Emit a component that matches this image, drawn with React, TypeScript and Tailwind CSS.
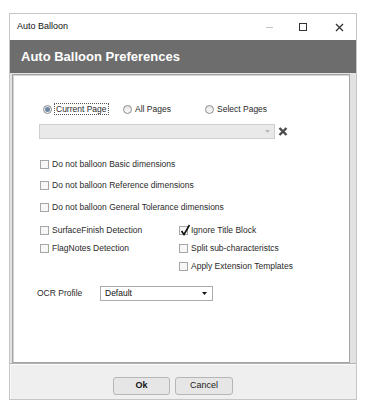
import type { ReactNode } from 'react';

const font = { fontFamily: '"Liberation Sans", Arial, sans-serif' };

function Radio({ checked, children }: { checked?: boolean; children: ReactNode }) {
  return (
    <div className="flex items-center">
      <span className="flex h-[9px] w-[9px] items-center justify-center rounded-full border border-[#8c8c8c] bg-gradient-to-b from-[#e6e6e6] to-[#fafafa]">
        {checked && <span className="h-[5px] w-[5px] rounded-full bg-[#6f86a3]" />}
      </span>
      {children}
    </div>
  );
}

function Check({ checked, label }: { checked?: boolean; label: string }) {
  return (
    <div className="flex h-[11px] items-center">
      <span className="relative h-[9px] w-[9px] border border-[#a6a6a6] bg-[#f7f7f7]">
        {checked && (
          <svg
            className="absolute left-[0px] top-[-3px]"
            width="11"
            height="12"
            viewBox="0 0 11 12"
          >
            <path d="M1.5 7 L4 10.5 L9.5 1" fill="none" stroke="#111" strokeWidth="1.6" />
          </svg>
        )}
      </span>
      <span className="ml-[3px] text-[8.5px] leading-none text-[#2a2a2a]">{label}</span>
    </div>
  );
}

export default function App() {
  return (
    <div className="h-[413px] w-[372px] bg-white pl-[9px] pt-[13px]" style={font}>
      <div className="flex h-[387px] w-[348px] flex-col border border-[#c6c6c6]">
        {/* title bar */}
        <div className="flex h-[26px] items-center bg-white pl-[7px]">
          <span className="flex-1 text-[9px] text-[#111]">Auto Balloon</span>
          <span className="mr-[26px] h-px w-[7px] bg-[#c4c4c4]" />
          <span className="mr-[28px] h-[8px] w-[8px] border-[1.5px] border-[#333]" />
          <svg className="mr-[12px]" width="9" height="9" viewBox="0 0 9 9">
            <path d="M1 1 L8 8 M8 1 L1 8" stroke="#333" strokeWidth="1.3" />
          </svg>
        </div>

        {/* header */}
        <div className="flex h-[33px] items-center bg-[#6d6d6d] pl-[11px]">
          <span className="text-[13px] font-bold text-white">Auto Balloon Preferences</span>
        </div>

        {/* body */}
        <div className="flex flex-1 bg-[#e2e2e2] pl-[2px] pt-px">
          <div className="flex-1 border border-[#a4a4a4] bg-white shadow-[inset_1px_1px_0_#d4d4d4]">
            <div className="mt-[28px] flex h-[12px] items-center pl-[30px] text-[8.5px] text-[#2a2a2a]">
              <div className="w-[80px]">
                <Radio checked>
                  <span className="ml-[2px] border border-dotted border-[#555] px-[1px] leading-[10px]">
                    Current Page
                  </span>
                </Radio>
              </div>
              <div className="w-[82px]">
                <Radio>
                  <span className="ml-[3px]">All Pages</span>
                </Radio>
              </div>
              <Radio>
                <span className="ml-[3px]">Select Pages</span>
              </Radio>
            </div>

            <div className="mt-[9px] flex items-center pl-[26px]">
              <div className="flex h-[15px] w-[236px] items-center justify-end border border-[#cfcfcf] bg-[#e9e9e9] pr-[4px]">
                <svg width="5" height="3" viewBox="0 0 5 3">
                  <path d="M0 0 H5 L2.5 3 Z" fill="#b8b8b8" />
                </svg>
              </div>
              <svg className="ml-[3px]" width="10" height="9" viewBox="0 0 10 9">
                <path d="M1.5 1 L8.5 8 M8.5 1 L1.5 8" stroke="#4a4a4a" strokeWidth="2.4" />
              </svg>
            </div>

            <div className="pl-[27px]">
              <div className="mt-[20px]">
                <Check label="Do not balloon Basic dimensions" />
              </div>
              <div className="mt-[10px]">
                <Check label="Do not balloon Reference dimensions" />
              </div>
              <div className="mt-[11px]">
                <Check label="Do not balloon General Tolerance dimensions" />
              </div>
              <div className="mt-[12px] flex">
                <div className="flex w-[139px] flex-col gap-[7px]">
                  <Check label="SurfaceFinish Detection" />
                  <Check label="FlagNotes Detection" />
                </div>
                <div className="flex flex-col gap-[7px]">
                  <Check checked label="Ignore Title Block" />
                  <Check label="Split sub-characteristcs" />
                  <Check label="Apply Extension Templates" />
                </div>
              </div>
            </div>

            <div className="mt-[14px] flex items-center pl-[24px]">
              <span className="w-[63px] text-[8.5px] text-[#2a2a2a]">OCR Profile</span>
              <div className="flex h-[15px] w-[113px] items-center justify-between border border-[#ababab] bg-white pl-[4px] pr-[5px]">
                <span className="text-[8.5px] text-[#111]">Default</span>
                <svg width="5" height="3" viewBox="0 0 5 3">
                  <path d="M0 0 H5 L2.5 3 Z" fill="#111" />
                </svg>
              </div>
            </div>
          </div>
          <div className="w-[6px]" />
        </div>

        {/* footer */}
        <div className="flex h-[36px] items-start border-t border-[#b2b2b2] bg-[#efefef] pl-[103px] pt-[13px] shadow-[inset_1px_1px_0_#fafafa]">
          <button className="h-[18px] w-[57px] rounded-[3px] border border-[#b6b6b6] bg-[#e6e6e6] text-[9px] font-bold text-[#111]">
            Ok
          </button>
          <button className="ml-[5px] h-[18px] w-[58px] rounded-[3px] border border-[#b6b6b6] bg-[#e6e6e6] text-[9px] text-[#222]">
            Cancel
          </button>
        </div>
      </div>
    </div>
  );
}
